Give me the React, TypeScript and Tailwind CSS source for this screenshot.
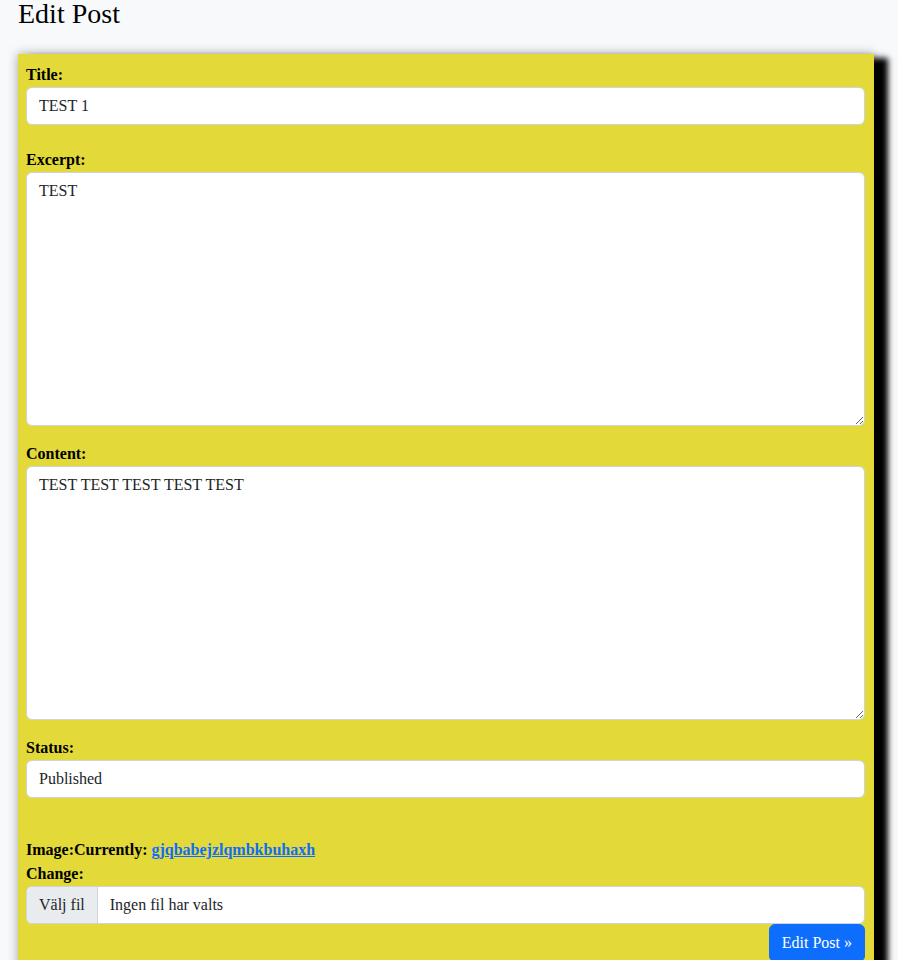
// edit post form

import { useState } from "react";

export default function App() {
  const [title, setTitle] = useState("TEST 1");
  const [excerpt, setExcerpt] = useState("TEST");
  const [content, setContent] = useState("TEST TEST TEST TEST TEST");
  const [status, setStatus] = useState("Published");

  const field =
    "block w-full h-[38px] px-3 py-[6px] bg-white border border-[#ced4da] rounded-[6px] text-[16px] leading-6 text-[#212529] focus:outline-none";
  const area =
    "block w-full h-[254px] px-3 py-[6px] bg-white border border-[#ced4da] rounded-[6px] text-[16px] leading-6 text-[#212529] focus:outline-none";

  return (
    <div className="min-h-[960px] bg-[#f8f9fa] pl-[18px] pr-[24px] font-['Liberation_Serif',serif] text-[16px] text-black overflow-hidden">
      <h1 className="m-0 text-[28px] leading-[28px] font-normal text-black">Edit Post</h1>

      <form
        onSubmit={(e) => e.preventDefault()}
        className="mt-[26px] w-[856px] bg-[#e3d938] pt-[9px] pl-2 pr-[9px] pb-2 shadow-[14px_4px_6px_#000,0_0_10px_rgba(0,0,0,0.35)]"
      >
        <label className="block font-bold leading-6">Title:</label>
        <input className={field} value={title} onChange={(e) => setTitle(e.target.value)} />

        <label className="block font-bold leading-6 mt-[23px]">Excerpt:</label>
        <textarea className={area} value={excerpt} onChange={(e) => setExcerpt(e.target.value)} />

        <label className="block font-bold leading-6 mt-[16px]">Content:</label>
        <textarea className={area} value={content} onChange={(e) => setContent(e.target.value)} />

        <label className="block font-bold leading-6 mt-[16px]">Status:</label>
        <input className={field} value={status} onChange={(e) => setStatus(e.target.value)} />

        <p className="mt-[40px] font-bold leading-6">
          Image:Currently:{" "}
          <a href="#" className="text-[#0d6efd] underline">
            gjqbabejzlqmbkbuhaxh
          </a>
        </p>
        <label className="block font-bold leading-6">Change:</label>
        <div className="flex h-[38px] bg-white border border-[#ced4da] rounded-[6px] overflow-hidden text-[#212529]">
          <span className="flex items-center px-3 bg-[#e9ecef] border-r border-[#ced4da]">Välj fil</span>
          <span className="flex items-center pl-3">Ingen fil har valts</span>
        </div>

        <div className="flex justify-end">
          <button
            type="submit"
            className="h-[38px] px-3 bg-[#0d6efd] text-white rounded-[6px] border border-[#0d6efd] leading-6"
          >
            Edit Post »
          </button>
        </div>
      </form>
    </div>
  );
}
